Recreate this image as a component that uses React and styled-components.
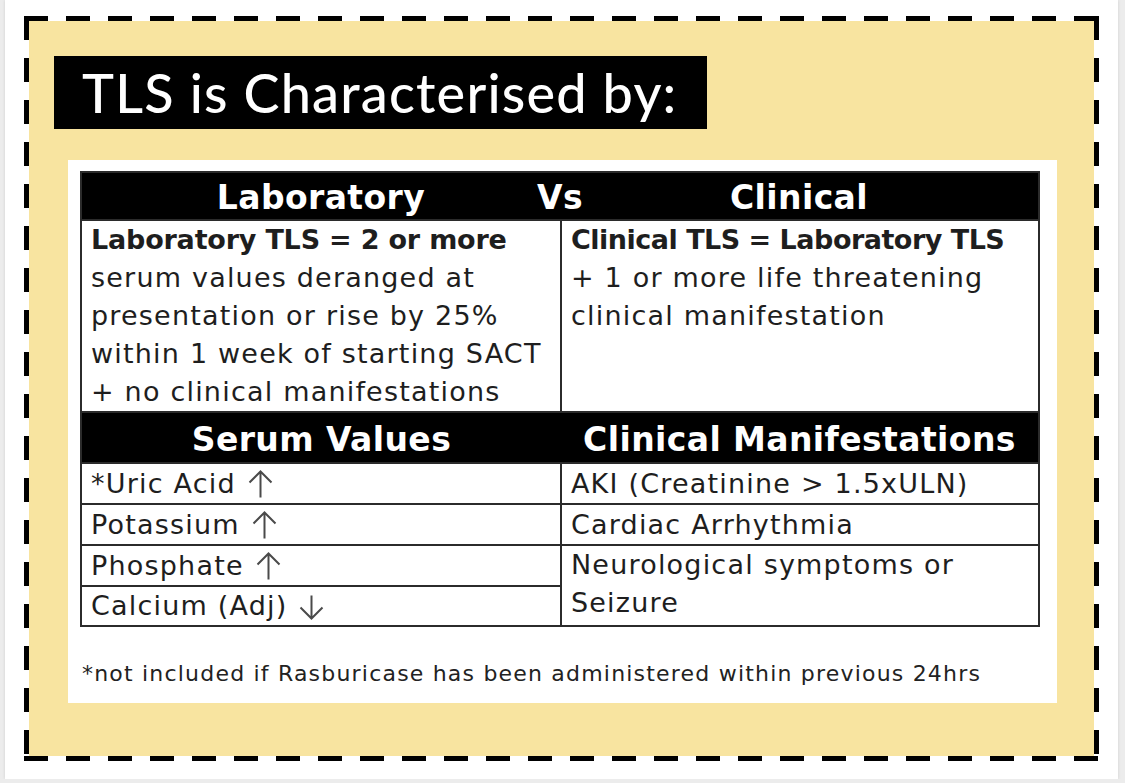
import React from "react";
import styled, { createGlobalStyle } from "styled-components";

const Global = createGlobalStyle`
  html, body { margin: 0; padding: 0; background: #ececec; }
  body { font-family: "DejaVu Sans", sans-serif; }
  * { box-sizing: border-box; }
`;

const Page = styled.div`
  margin-left: 5px;
  width: 1113px;
  height: 779px;
  background: #ffffff;
  box-shadow: 0 0 3px rgba(0, 0, 0, 0.12);
  padding: 16px 0 0 19px;
`;

const dashH = `repeating-linear-gradient(90deg, #000 0 24px, transparent 24px 42px)`;
const dashV = `repeating-linear-gradient(180deg, #000 0 24px, transparent 24px 42px)`;

const Frame = styled.div`
  width: 1075px;
  height: 745px;
  padding: 5px;
  background-image: ${dashH}, ${dashH}, ${dashV}, ${dashV};
  background-size: 100% 5px, 100% 5px, 5px 100%, 5px 100%;
  background-position: left top, left bottom, left top, right top;
  background-repeat: no-repeat;
`;

const Card = styled.div`
  width: 100%;
  height: 100%;
  background: #f8e4a0;
  padding: 35px 0 0 25px;
  display: flex;
  flex-direction: column;
  align-items: flex-start;
`;

const Title = styled.h1`
  margin: 0;
  width: 653px;
  height: 73px;
  background: #000;
  color: #fff;
  display: flex;
  align-items: center;
  padding-left: 28px;
  font-family: Lato, "Open Sans", sans-serif;
  font-weight: 500;
  font-size: 54px;
  letter-spacing: 1.2px;
  white-space: nowrap;
`;

const Panel = styled.div`
  margin: 31px 0 0 14px;
  width: 989px;
  height: 543px;
  background: #fff;
  padding: 11px 17px 0 12px;
`;

const Table = styled.table`
  width: 960px;
  border-collapse: collapse;
  table-layout: fixed;
  border: 2px solid #2b2b2b;
  color: #1e1e1e;
  font-size: 27px;
  letter-spacing: 1.2px;
`;

const HeadCell = styled.th`
  background: #000;
  color: #fff;
  font-weight: bold;
  font-size: 33px;
  letter-spacing: 0.4px;
  height: ${(p) => p.$h}px;
  padding: 3px 0 0;
  text-align: center;
  vertical-align: middle;
  white-space: nowrap;
  line-height: 1;
`;

const HeadGrid = styled.div`
  display: grid;
  grid-template-columns: 1fr 1fr;
  align-items: center;
`;

const HeadLabel = styled.span`
  grid-row: 1;
  grid-column: ${(p) => p.$col};
  justify-self: center;
`;

const Cell = styled.td`
  border: 2px solid #2b2b2b;
  padding: 0 6px 0 9px;
  height: ${(p) => (p.$h ? `${p.$h}px` : "auto")};
  vertical-align: ${(p) => p.$v || "middle"};
  line-height: 38px;
  white-space: nowrap;
`;

const Lead = styled.strong`
  font-weight: bold;
  letter-spacing: ${(p) => p.$ls || "0px"};
`;

const ArrowSvg = styled.svg`
  width: 25px;
  height: ${(p) => (p.$down ? 25 : 28)}px;
  margin-left: 2px;
  vertical-align: -5px;
  transform: ${(p) => (p.$down ? "rotate(180deg)" : "none")};
  stroke: #4a4a4a;
  stroke-width: 2;
  fill: none;
  overflow: visible;
`;

const Arrow = ({ down }) => (
  <ArrowSvg $down={down} viewBox={down ? "0 0 25 25" : "0 0 25 28"} role="img" aria-label={down ? "↓" : "↑"}>
    <path d={down ? "M12.5 1.5V24.5M1.5 12.5L12.5 1.5L23.5 12.5" : "M12.5 1.5V27.5M1.5 12.5L12.5 1.5L23.5 12.5"} />
  </ArrowSvg>
);

const Footnote = styled.p`
  margin: 32px 0 0 2px;
  font-size: 22px;
  letter-spacing: 1.2px;
  line-height: 30px;
  color: #222;
  white-space: nowrap;
`;

const serum = [
  ["*Uric Acid", false],
  ["Potassium", false],
  ["Phosphate", false],
  ["Calcium (Adj)", true],
];

export default function App() {
  return (
    <>
      <Global />
      <Page>
        <Frame>
          <Card>
            <Title>TLS is Characterised by:</Title>
            <Panel>
              <Table>
                <colgroup>
                  <col style={{ width: "50.1%" }} />
                  <col />
                </colgroup>
                <tbody>
                  <tr>
                    <HeadCell colSpan={2} $h={48}>
                      <HeadGrid>
                        <HeadLabel $col="1">Laboratory</HeadLabel>
                        <HeadLabel $col="1 / span 2">Vs</HeadLabel>
                        <HeadLabel $col="2">Clinical</HeadLabel>
                      </HeadGrid>
                    </HeadCell>
                  </tr>
                  <tr>
                    <Cell $h={192} $v="top">
                      <Lead $ls="-0.2px">Laboratory TLS = 2 or more</Lead>
                      <br />
                      serum values deranged at
                      <br />
                      presentation or rise by 25%
                      <br />
                      within 1 week of starting SACT
                      <br />+ no clinical manifestations
                    </Cell>
                    <Cell $v="top">
                      <Lead $ls="-0.5px">Clinical TLS = Laboratory TLS</Lead>
                      <br />+ 1 or more life threatening
                      <br />
                      clinical manifestation
                    </Cell>
                  </tr>
                  <tr>
                    <HeadCell $h={51}>Serum Values</HeadCell>
                    <HeadCell $h={51}>Clinical Manifestations</HeadCell>
                  </tr>
                  <tr>
                    <Cell $h={41}>
                      {serum[0][0]} <Arrow down={serum[0][1]} />
                    </Cell>
                    <Cell>AKI (Creatinine &gt; 1.5xULN)</Cell>
                  </tr>
                  <tr>
                    <Cell $h={41}>
                      {serum[1][0]} <Arrow down={serum[1][1]} />
                    </Cell>
                    <Cell>Cardiac Arrhythmia</Cell>
                  </tr>
                  <tr>
                    <Cell $h={41}>
                      {serum[2][0]} <Arrow down={serum[2][1]} />
                    </Cell>
                    <Cell rowSpan={2} $v="top">
                      Neurological symptoms or
                      <br />
                      Seizure
                    </Cell>
                  </tr>
                  <tr>
                    <Cell $h={39}>
                      {serum[3][0]} <Arrow down={serum[3][1]} />
                    </Cell>
                  </tr>
                </tbody>
              </Table>
              <Footnote>
                *not included if Rasburicase has been administered within previous 24hrs
              </Footnote>
            </Panel>
          </Card>
        </Frame>
      </Page>
    </>
  );
}
